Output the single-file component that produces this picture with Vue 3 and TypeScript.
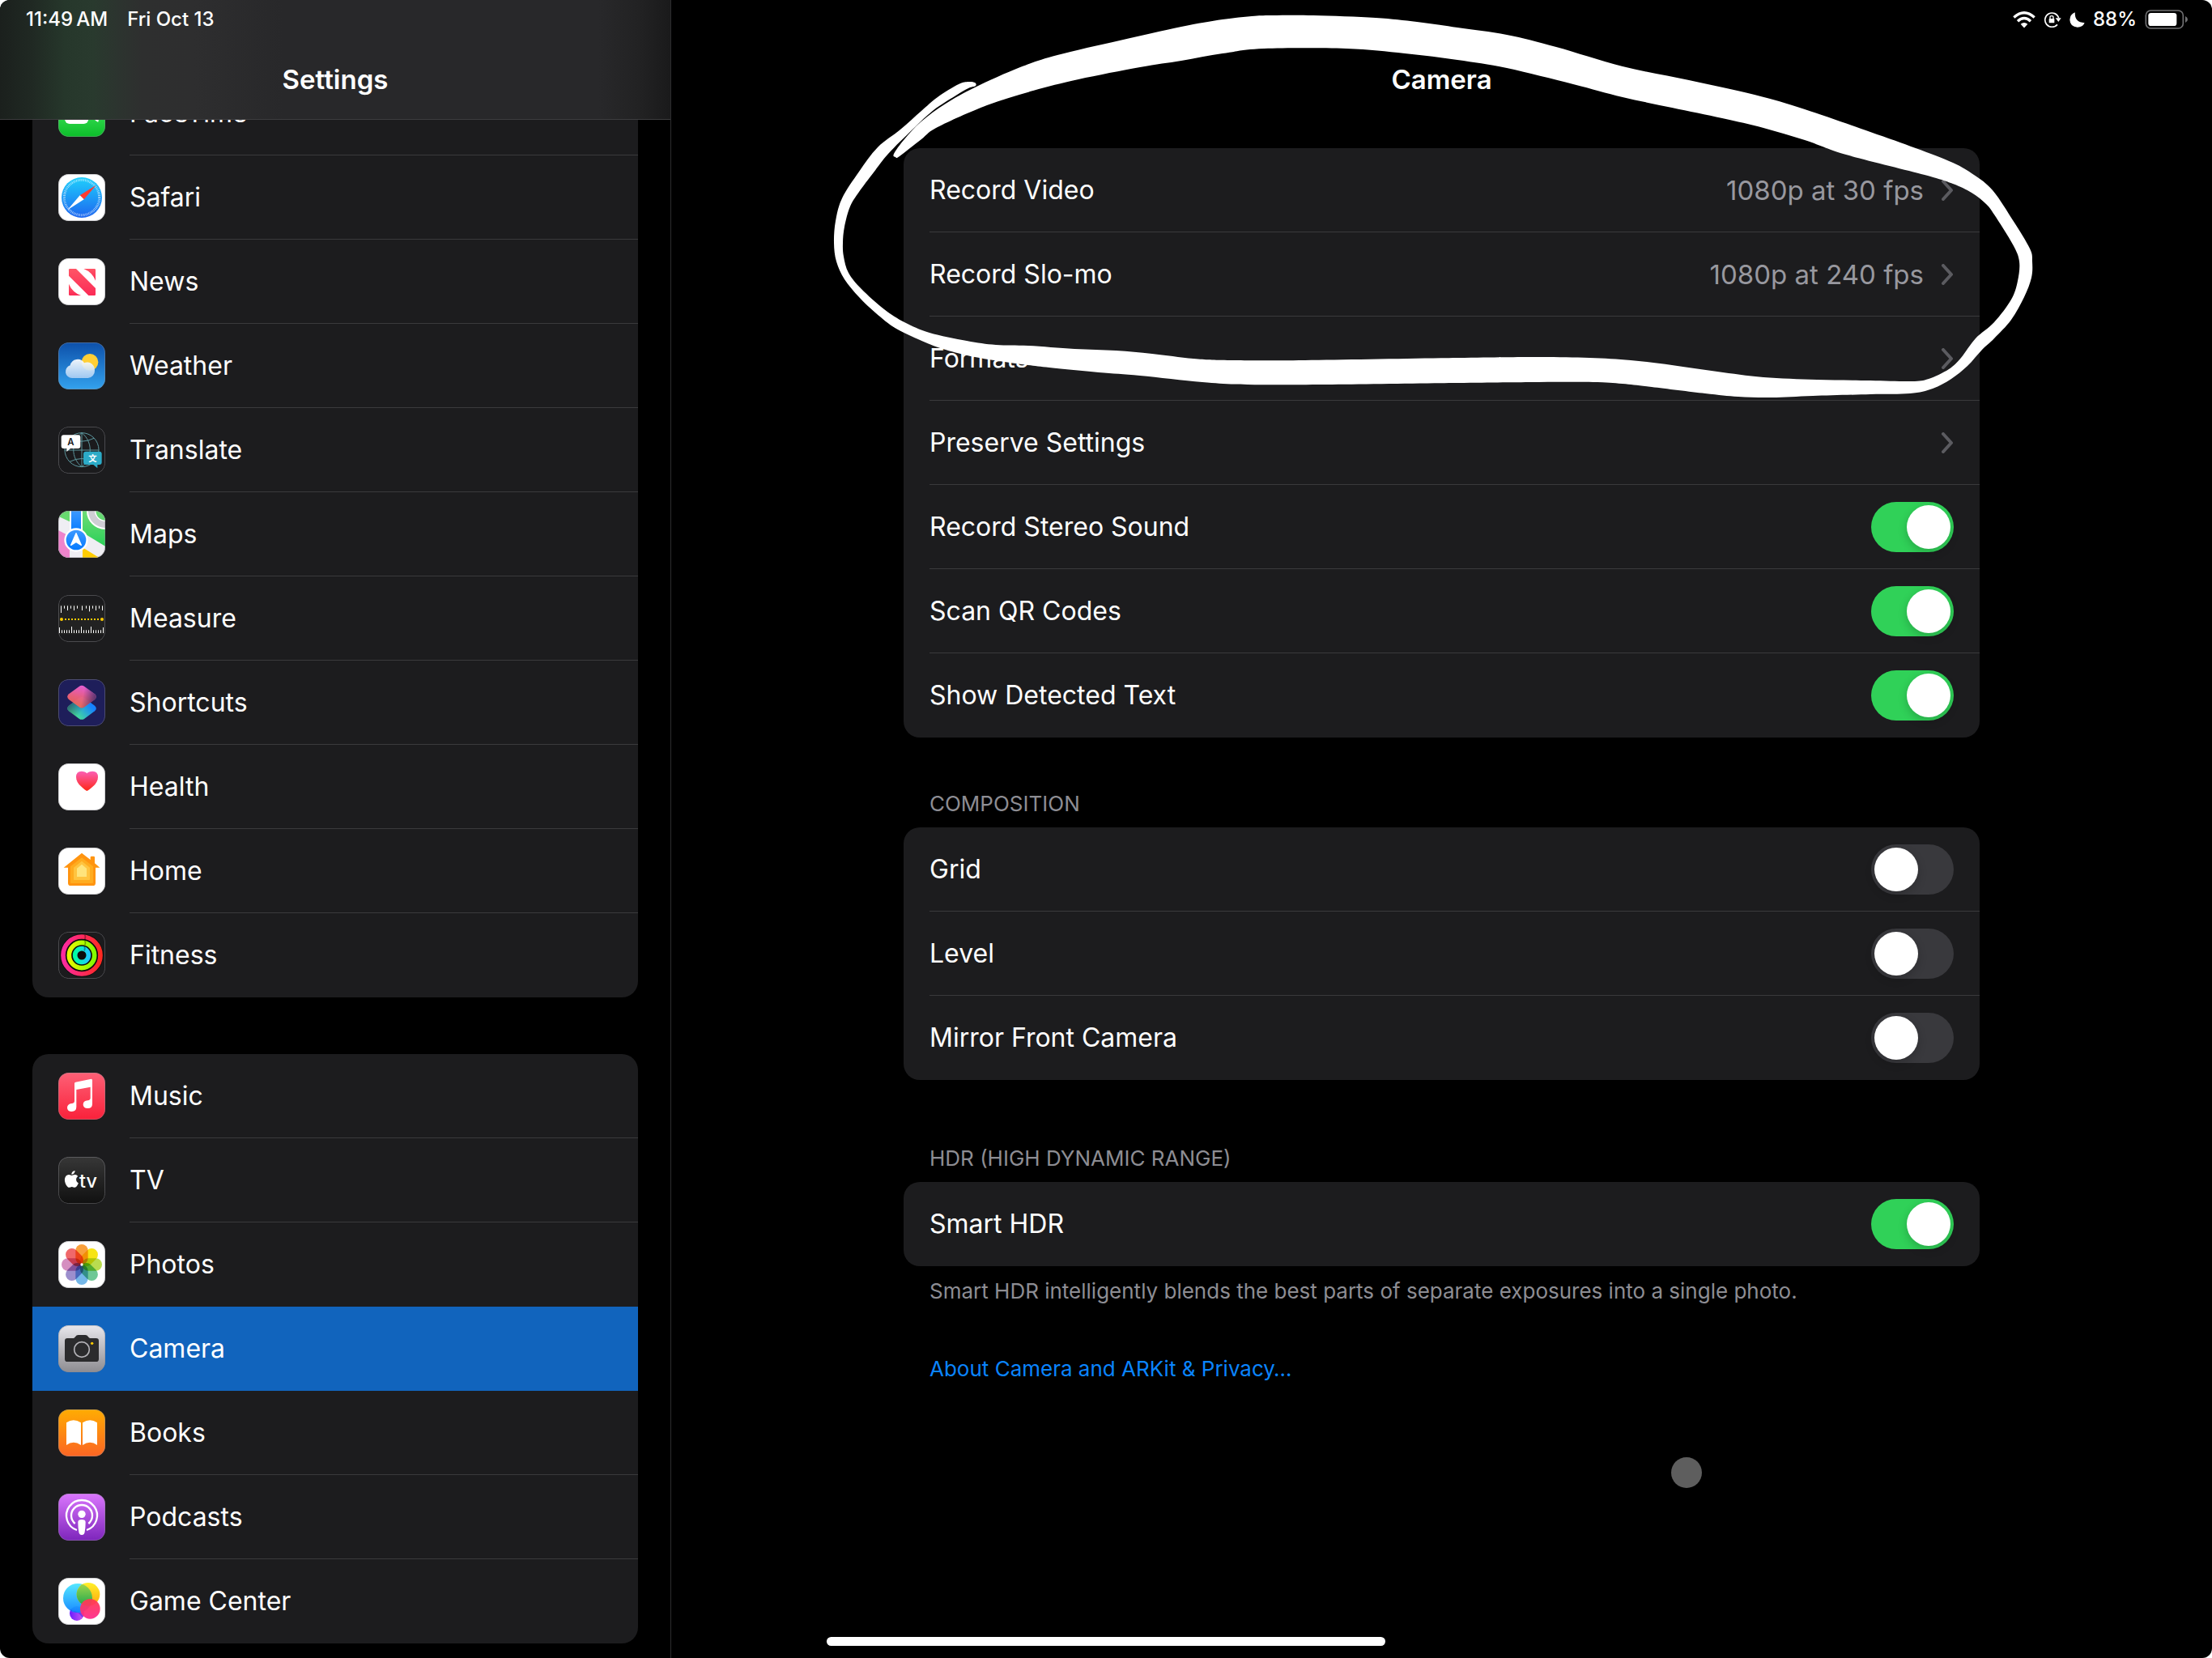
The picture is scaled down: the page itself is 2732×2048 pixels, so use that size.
<script setup lang="ts">
import { ref } from 'vue'

interface AppItem {
  name: string
  icon: string
}

interface LinkRow {
  kind: 'link'
  label: string
  value?: string
}

interface SwitchRow {
  kind: 'switch'
  label: string
  on: boolean
}

interface Group {
  title?: string
  spaced?: boolean
  footer?: string
  rows: (LinkRow | SwitchRow)[]
}

type Point = [number, number]

const appGroups: AppItem[][] = [
  [
    { name: 'FaceTime', icon: 'facetime' },
    { name: 'Safari', icon: 'safari' },
    { name: 'News', icon: 'news' },
    { name: 'Weather', icon: 'weather' },
    { name: 'Translate', icon: 'translate' },
    { name: 'Maps', icon: 'maps' },
    { name: 'Measure', icon: 'measure' },
    { name: 'Shortcuts', icon: 'shortcuts' },
    { name: 'Health', icon: 'health' },
    { name: 'Home', icon: 'home' },
    { name: 'Fitness', icon: 'fitness' },
  ],
  [
    { name: 'Music', icon: 'music' },
    { name: 'TV', icon: 'tv' },
    { name: 'Photos', icon: 'photos' },
    { name: 'Camera', icon: 'camera' },
    { name: 'Books', icon: 'books' },
    { name: 'Podcasts', icon: 'podcasts' },
    { name: 'Game Center', icon: 'game' },
  ],
]

const selected = ref('Camera')

const groups = ref<Group[]>([
  {
    rows: [
      { kind: 'link', label: 'Record Video', value: '1080p at 30 fps' },
      { kind: 'link', label: 'Record Slo-mo', value: '1080p at 240 fps' },
      { kind: 'link', label: 'Formats' },
      { kind: 'link', label: 'Preserve Settings' },
      { kind: 'switch', label: 'Record Stereo Sound', on: true },
      { kind: 'switch', label: 'Scan QR Codes', on: true },
      { kind: 'switch', label: 'Show Detected Text', on: true },
    ],
  },
  {
    title: 'COMPOSITION',
    rows: [
      { kind: 'switch', label: 'Grid', on: false },
      { kind: 'switch', label: 'Level', on: false },
      { kind: 'switch', label: 'Mirror Front Camera', on: false },
    ],
  },
  {
    title: 'HDR (HIGH DYNAMIC RANGE)',
    spaced: true,
    footer: 'Smart HDR intelligently blends the best parts of separate exposures into a single photo.',
    rows: [{ kind: 'switch', label: 'Smart HDR', on: true }],
  },
])

/* Vertical two-stop gradient */
const grad = (id: string, top: string, bottom: string): string =>
  `<linearGradient id="${id}" x1="0" y1="0" x2="0" y2="1"><stop offset="0" stop-color="${top}"/><stop offset="1" stop-color="${bottom}"/></linearGradient>`

const gradH = (id: string, left: string, right: string): string =>
  `<linearGradient id="${id}" x1="0" y1="0" x2="1" y2="0"><stop offset="0" stop-color="${left}"/><stop offset="1" stop-color="${right}"/></linearGradient>`

const tile = (fill: string): string => `<rect width="174" height="174" fill="${fill}"/>`

const tick = (x: number, y: number, h: number): string =>
  `<rect x="${x - 1}" y="${y}" width="3" height="${h}" fill="#fff"/>`

const topTicks = [[10, 26], [22, 10], [34, 17], [46, 10], [58, 17], [70, 10], [88, 17], [103, 10], [115, 21], [127, 10], [139, 17], [151, 10], [163, 17]]
  .map(([x, h]) => tick(x, 40, h))
  .join('')

const bottomTicks = Array.from({ length: 19 }, (_, i) => {
  const tall = i === 0 || i === 18
  const mid = i === 5 || i === 9 || i === 13
  const h = tall ? 21 : mid ? 24 : 11
  return tick(4 + i * 9, 141 - h, h)
}).join('')

const petals = ['#f9a03c', '#f7e414', '#b9dc4f', '#6fc796', '#74b7e8', '#9c8fcd', '#d58fc0', '#f0686a']
  .map(
    (color, i) =>
      `<rect x="64" y="12" width="46" height="74" rx="23" fill="${color}" transform="rotate(${i * 45} 87 87)" style="mix-blend-mode:multiply"/>`,
  )
  .join('')

const diamond = 'M97 27L135 55Q146 65 135 75L97 103Q87 110 77 103L39 75Q28 65 39 55L77 27Q87 20 97 27Z'

const icons: Record<string, string> = {
  facetime: `${grad('ft', '#5ff777', '#0bbd29')}${tile('url(#ft)')}
    <rect x="24" y="48" width="88" height="78" rx="18" fill="#fff"/><path d="M118 80L144 60Q149 57 149 63V115Q149 121 144 118L118 98Z" fill="#fff"/>`,
  safari: `${grad('sf', '#1fd0fc', '#1d66f0')}${tile('#fff')}
    <circle cx="87" cy="87" r="75" fill="url(#sf)"/>
    <circle cx="87" cy="87" r="65" fill="none" stroke="#fff" stroke-opacity=".8" stroke-width="9" stroke-dasharray="2 3.67"/>
    <path d="M140 41L95 94L80 79Z" fill="#ff3b30"/><path d="M34 133L80 79L95 94Z" fill="#fff"/>`,
  news: `${grad('nw', '#ff5566', '#fb2b56')}${tile('#fff')}
    <g fill="url(#nw)"><path d="M43 39H66L138 111V134Q138 138 134 138H112L39 65V43Q39 39 43 39Z"/>
    <path d="M94 39H134Q138 39 138 43V83Q126 52 94 39Z"/><path d="M39 95Q52 126 84 138H43Q39 138 39 134Z"/></g>`,
  weather: `${grad('wt', '#0d50aa', '#33a2ee')}${grad('wc', '#ffffff', '#a9cdf3')}${tile('url(#wt)')}
    <circle cx="117" cy="73" r="31" fill="#ffcf35"/>
    <path d="M51 132A24 24 0 0 1 44 85A28.500 28.500 0 0 1 96 76A28 28 0 0 1 135 104A27 27 0 0 1 110 132Z" fill="url(#wc)" fill-opacity=".92"/>`,
  translate: `${tile('#1b1b1d')}
    <g fill="none" stroke="#5d979e" stroke-width="3"><circle cx="87" cy="86" r="63"/><path d="M87 22V150M23 87H151"/>
    <path d="M87 23C128 55 128 117 87 149M87 23C46 55 46 117 87 149"/><path d="M42 43Q87 66 132 43M42 130Q87 107 132 130"/></g>
    <path d="M20 31H73Q82 31 82 40V72Q82 81 73 81H45L31 93V81H20Q11 81 11 72V40Q11 31 20 31Z" fill="#fff"/>
    <path d="M102 92H152Q161 92 161 101V132Q161 141 152 141H145V154L130 141H102Q93 141 93 132V101Q93 92 102 92Z" fill="#2cabc7"/>
    <text x="46" y="69" font-size="34" font-weight="600" text-anchor="middle" font-family="Inter, sans-serif" fill="#1c1c1e">A</text>
    <text x="127" y="128" font-size="31" font-weight="700" text-anchor="middle" font-family="'Noto Sans CJK SC', sans-serif" fill="#fff">文</text>`,
  maps: `${grad('mg', '#6fdc76', '#2bd058')}${grad('mb', '#3e99ff', '#057aff')}${tile('#efeef3')}
    <path d="M0 0H42V40L0 20Z" fill="#67db6f"/><path d="M0 72L42 94V174H0Z" fill="#ee84cc"/>
    <path d="M90 0H174V131L90 80Z" fill="url(#mg)"/><path d="M90 136L152 174H90Z" fill="#ffcc02"/>
    <circle cx="174" cy="0" r="52" fill="none" stroke="#fff" stroke-width="34"/><circle cx="174" cy="0" r="51" fill="none" stroke="#cfced4" stroke-width="24"/>
    <rect x="42" width="48" height="80" fill="#fff"/><rect x="48" width="36" height="80" fill="url(#mb)"/>
    <circle cx="66" cy="108" r="44" fill="#fff"/><circle cx="66" cy="108" r="37" fill="url(#mb)"/>
    <path d="M66 83L85 127L66 115L47 127Z" fill="#fff" stroke="#fff" stroke-width="4" stroke-linejoin="round"/>`,
  measure: `${tile('#1b1b1d')}<rect y="34" width="174" height="112" fill="#222"/>${topTicks}${bottomTicks}
    <path d="M24 90H152" stroke="#ffcc00" stroke-width="6" stroke-dasharray="6 6"/>
    <circle cx="12" cy="90" r="6" fill="#ffcc00"/><circle cx="162" cy="90" r="6" fill="#ffcc00"/>`,
  shortcuts: `<linearGradient id="s1" gradientUnits="userSpaceOnUse" x1="95" y1="28" x2="75" y2="104"><stop offset="0" stop-color="#f562d8"/><stop offset=".55" stop-color="#f8647f"/><stop offset="1" stop-color="#f4664f"/></linearGradient>
    <linearGradient id="s2" gradientUnits="userSpaceOnUse" x1="125" y1="60" x2="75" y2="104"><stop offset="0" stop-color="#1682ff"/><stop offset="1" stop-color="#45dc9a"/></linearGradient>
    <linearGradient id="s3" gradientUnits="userSpaceOnUse" x1="90" y1="65" x2="138" y2="75"><stop offset="0" stop-color="#4a2f6b" stop-opacity="0"/><stop offset="1" stop-color="#4a2f6b" stop-opacity=".9"/></linearGradient>
    <linearGradient id="s4" gradientUnits="userSpaceOnUse" x1="36" y1="50" x2="80" y2="84"><stop offset="0" stop-color="#26405f" stop-opacity=".8"/><stop offset="1" stop-color="#26405f" stop-opacity="0"/></linearGradient>
    ${tile('#1e1e5a')}
    <g transform="translate(0 43)"><path d="${diamond}" fill="url(#s2)"/><path d="${diamond}" fill="url(#s4)"/></g>
    <path d="${diamond}" fill="url(#s1)" fill-opacity=".92"/><path d="${diamond}" fill="url(#s3)"/>`,
  health: `${grad('hl', '#fb5fb4', '#fe2716')}${tile('#fff')}
    <path d="M106 102Q102 102 84 85Q66 68 66 50Q66 29 86 29Q100 29 106 37Q112 29 127 29Q147 29 147 50Q147 68 129 85Q110 102 106 102Z" fill="url(#hl)"/>`,
  home: `${tile('#fff')}
    <path d="M87 20L119 45V36Q119 32 123 32H131Q135 32 135 36V58L154 74H138V131Q138 141 128 141H46Q36 141 36 131V74H20Z" fill="#ff9410"/>
    <path d="M87 37L129 70V129Q129 132 126 132H48Q45 132 45 129V70Z" fill="#ffac1f"/>
    <path d="M87 50L117 74V117Q117 120 114 120H60Q57 120 57 117V74Z" fill="#ffc440"/>
    <path d="M87 62L105 77V108H69V77Z" fill="#ffe47c"/>`,
  fitness: `${gradH('r1', '#fd2aa0', '#ff2a22')}${gradH('r2', '#e6fa00', '#84fb00')}${gradH('r3', '#00ffa3', '#1fcaff')}${tile('#1b1b1d')}
    <circle cx="87" cy="87" r="80" fill="#0d0d0d"/>
    <g fill="none" stroke-width="17"><circle cx="87" cy="87" r="69" stroke="url(#r1)"/><circle cx="87" cy="87" r="47" stroke="url(#r2)"/><circle cx="87" cy="87" r="25" stroke="url(#r3)"/></g>
    <path d="M98 11Q103 19 98 28M98 33Q103 40 98 49M96 55Q101 62 96 70" fill="none" stroke="#000" stroke-opacity=".35" stroke-width="5"/>`,
  music: `${grad('mu', '#fd6076', '#fa213a')}${tile('url(#mu)')}
    <path d="M64 35L122 23Q126 23 126 28V116Q126 132 109 132Q92 132 92 118Q92 104 109 103Q119 102 119 94V53L67 63V127Q67 144 50 144Q33 144 33 130Q33 116 50 114Q60 113 60 105V40Q60 36 64 35Z" fill="#fff"/>`,
  tv: `${grad('tv', '#373737', '#101010')}${tile('url(#tv)')}
    <g transform="translate(18 51) scale(2.600)" fill="#fff"><path d="M12.152 6.896c-.948 0-2.415-1.078-3.960-1.040-2.040.027-3.910 1.183-4.961 3.014-2.117 3.675-.546 9.103 1.519 12.090 1.013 1.454 2.208 3.090 3.792 3.039 1.520-.065 2.090-.987 3.935-.987 1.831 0 2.350.987 3.960.948 1.637-.026 2.676-1.480 3.676-2.948 1.156-1.688 1.636-3.325 1.662-3.415-.039-.013-3.182-1.221-3.220-4.857-.026-3.040 2.480-4.494 2.597-4.559-1.429-2.090-3.623-2.324-4.390-2.376-2-.156-3.675 1.090-4.610 1.090zM15.530 3.830c.843-1.012 1.400-2.427 1.245-3.830-1.207.052-2.662.805-3.532 1.818-.780.896-1.454 2.338-1.273 3.714 1.338.104 2.715-.688 3.559-1.701"/></g>
    <text x="78" y="114" font-size="70" font-weight="500" font-family="Inter, sans-serif" fill="#fff">tv</text>`,
  photos: `${tile('#fff')}${petals}<circle cx="87" cy="87" r="5" fill="#fff"/>`,
  camera: `${grad('cm', '#e8e7ec', '#8d8c91')}${tile('url(#cm)')}
    <path d="M34 48H56Q60 48 63 43Q67 36 74 36H100Q107 36 111 43Q114 48 118 48H140Q150 48 150 58V125Q150 135 140 135H34Q24 135 24 125V58Q24 48 34 48Z" fill="#2b2b2d"/>
    <circle cx="87" cy="90" r="28" fill="none" stroke="#b3b2b7" stroke-width="5"/><circle cx="125" cy="67" r="5" fill="#ffcc00"/>`,
  books: `${grad('bk', '#ffac02', '#fb6524')}${tile('url(#bk)')}
    <path d="M84 49Q56 30 30 49V132Q56 113 84 132ZM90 49Q118 30 144 49V132Q118 113 90 132Z" fill="#fff"/>`,
  podcasts: `${grad('pd', '#da76fd', '#7d25bb')}${tile('url(#pd)')}
    <g fill="none" stroke="#fff" stroke-width="7"><path d="M69 135A57 57 0 1 1 105 135"/><path d="M62 111A39 39 0 1 1 112 111"/></g>
    <circle cx="87" cy="76" r="14" fill="#fff"/><path d="M73 106Q73 96 87 96Q101 96 101 106Q101 126 98 142Q97 153 87 153Q77 153 76 142Q73 126 73 106Z" fill="#fff"/>`,
  game: `${grad('g1', '#4be6ff', '#0a84ff')}${grad('g2', '#fff02a', '#ffa50a')}${grad('g3', '#ff3b4e', '#ff2a8c')}${gradH('g4', '#6a1cff', '#d05af0')}${grad('g5', '#a6d84a', '#1fa84e')}${tile('#fff')}
    <clipPath id="gc"><circle cx="72" cy="75" r="54"/></clipPath>
    <circle cx="69" cy="132" r="27" fill="url(#g4)"/><circle cx="72" cy="75" r="54" fill="url(#g1)" fill-opacity=".94"/>
    <circle cx="111" cy="61" r="43" fill="url(#g2)"/><circle cx="111" cy="61" r="43" fill="url(#g5)" clip-path="url(#gc)"/>
    <path d="M46 117Q72 138 94 124Q96 138 90 148Q70 120 44 122Z" fill="#4a30e8" fill-opacity=".6"/>
    <circle cx="118" cy="115" r="37" fill="url(#g3)" fill-opacity=".94"/>`,
}

/* Outline of the hand-drawn loop: round the outside, then back along the inside */
const loopPoints: Point[] = [
  [1104, 190], [1117, 172], [1138, 150], [1168, 128], [1204, 108], [1260, 83], [1306, 68], [1383, 50], [1459, 33], [1510, 24],
  [1546, 20], [1571, 19], [1622, 19], [1699, 22], [1750, 27], [1800, 34], [1861, 43], [1922, 58], [2004, 82], [2086, 99], [2167, 117],
  [2229, 135], [2310, 163], [2366, 183], [2412, 201], [2438, 216], [2461, 235], [2486, 272], [2507, 307], [2510, 323], [2509, 343],
  [2500, 367], [2484, 395], [2463, 418], [2448, 432], [2430, 452], [2410, 468], [2387, 480], [2359, 486], [2310, 487], [2239, 489],
  [2188, 491], [2147, 490], [2106, 486], [2040, 478], [2004, 474], [1968, 472], [1900, 472], [1800, 473], [1638, 475], [1541, 475], [1485, 472],
  [1408, 464], [1357, 460], [1296, 454], [1255, 449], [1204, 441], [1168, 432], [1143, 423], [1107, 406], [1082, 387], [1061, 367],
  [1043, 345], [1033, 323], [1030, 300], [1032, 273], [1040, 245], [1061, 212], [1084, 182], [1112, 160], [1138, 137], [1158, 120],
  [1184, 104], [1196, 101], [1204, 102], [1205, 106], [1196, 109], [1179, 119], [1153, 136], [1128, 159], [1097, 190], [1079, 213],
  [1061, 237], [1050, 255], [1043, 280], [1041, 300], [1042, 317], [1048, 337], [1064, 357], [1092, 382], [1117, 398], [1148, 411],
  [1194, 421], [1230, 426], [1270, 427], [1327, 431], [1378, 433], [1423, 437], [1474, 443], [1520, 445], [1612, 445], [1800, 442],
  [1900, 441], [1963, 442], [2014, 445], [2065, 451], [2121, 459], [2178, 466], [2244, 469], [2310, 470], [2361, 471], [2382, 468], [2407, 456],
  [2422, 442], [2440, 418], [2463, 398], [2484, 370], [2492, 347], [2494, 323], [2486, 302], [2463, 265], [2453, 252], [2435, 238],
  [2412, 227], [2377, 216], [2280, 191], [2229, 173], [2178, 158], [2127, 146], [2065, 133], [2004, 120], [1943, 104], [1861, 84],
  [1800, 74], [1735, 66], [1663, 60], [1561, 60], [1510, 66], [1459, 75], [1408, 83], [1332, 98], [1276, 112], [1219, 130],
  [1158, 157], [1138, 172], [1111, 193], [1106, 194],
]

/* Closed Catmull-Rom curve through the points */
function smooth(points: Point[]): string {
  const n = points.length
  let d = `M${points[0][0]} ${points[0][1]}`
  for (let i = 0; i < n; i++) {
    const [a, b, c, e] = [points[(i - 1 + n) % n], points[i], points[(i + 1) % n], points[(i + 2) % n]]
    d += `C${b[0] + (c[0] - a[0]) / 6} ${b[1] + (c[1] - a[1]) / 6} ${c[0] - (e[0] - b[0]) / 6} ${c[1] - (e[1] - b[1]) / 6} ${c[0]} ${c[1]}`
  }
  return d + 'Z'
}

const loopPath = smooth(loopPoints)
</script>

<template>
  <div class="screen">
    <aside class="sidebar">
      <header class="bar bar-side">
        <div class="status">
          <span>11:49&thinsp;AM</span>
          <span>Fri Oct 13</span>
        </div>
        <h1 class="title">Settings</h1>
      </header>
      <nav class="apps" aria-label="Apps">
        <div v-for="(group, g) in appGroups" :key="g" class="card">
          <a
            v-for="app in group"
            :key="app.name"
            href="#"
            class="app"
            :class="{ selected: app.name === selected }"
            @click.prevent="selected = app.name"
          >
            <svg class="app-icon" viewBox="0 0 174 174" aria-hidden="true">
              <g v-html="icons[app.icon]"></g>
              <rect x="1" y="1" width="172" height="172" rx="37" fill="none" stroke="#8e8e93" stroke-opacity=".5" stroke-width="3" />
            </svg>
            <span class="app-name">{{ app.name }}</span>
          </a>
        </div>
      </nav>
    </aside>

    <main class="pane">
      <header class="bar">
        <div class="status status-right">
          <svg class="wifi" viewBox="0 0 84 62" aria-label="Wi-Fi">
            <g fill="none" stroke="#fff" stroke-width="10">
              <path d="M4 22Q42 -12 80 22" />
              <path d="M18 36Q42 14 66 36" />
            </g>
            <path d="M29 47Q42 36 55 47L42 61Z" fill="#fff" />
          </svg>
          <svg class="lock" viewBox="0 0 64 60" aria-label="Rotation lock">
            <path d="M50 49A26 26 0 1 1 55 24" fill="none" stroke="#fff" stroke-width="5" />
            <path d="M43 25H64L54 39Z" fill="#fff" />
            <rect x="19" y="27" width="20" height="16" rx="2" fill="#fff" />
            <path d="M23 28V22Q23 17 29 17Q35 17 35 22V28" fill="none" stroke="#fff" stroke-width="4" />
          </svg>
          <svg class="moon" viewBox="0 0 56 56" aria-label="Do not disturb">
            <path d="M20 1Q18 38 55 39Q48 55 29 55Q2 53 1 28Q2 8 20 1Z" fill="#fff" />
          </svg>
          <span class="percent">88%</span>
          <svg class="battery" viewBox="0 0 160 72" aria-label="Battery">
            <rect x="3" y="3" width="138" height="66" rx="18" fill="none" stroke="#717173" stroke-width="5" />
            <rect x="12" y="12" width="105" height="48" rx="10" fill="#fff" />
            <path d="M149 24Q158 28 158 36Q158 44 149 48Z" fill="#717173" />
          </svg>
        </div>
        <h2 class="title">Camera</h2>
      </header>

      <div class="content">
        <section v-for="(group, g) in groups" :key="g" class="group">
          <h3 v-if="group.title" class="caption" :class="{ spaced: group.spaced }">{{ group.title }}</h3>
          <div class="card">
            <template v-for="row in group.rows" :key="row.label">
              <button v-if="row.kind === 'link'" type="button" class="row">
                <span class="row-body">
                  <span class="row-label">{{ row.label }}</span>
                  <span class="row-value">{{ row.value }}</span>
                  <svg class="chevron" viewBox="0 0 16 26" aria-hidden="true">
                    <path d="M3 2L13 13L3 24" fill="none" stroke="#5b5b60" stroke-width="4" stroke-linecap="round" stroke-linejoin="round" />
                  </svg>
                </span>
              </button>
              <label v-else class="row">
                <span class="row-body">
                  <span class="row-label">{{ row.label }}</span>
                  <input v-model="row.on" type="checkbox" role="switch" class="switch" />
                </span>
              </label>
            </template>
          </div>
          <p v-if="group.footer" class="footer">{{ group.footer }}</p>
        </section>
        <a href="#" class="privacy">About Camera and ARKit &amp; Privacy…</a>

        <svg class="loop" viewBox="1016 0 1529 500" aria-hidden="true">
          <path :d="loopPath" fill="#fff" />
        </svg>
      </div>
    </main>

    <span class="pointer"></span>
    <span class="home-indicator"></span>
  </div>
</template>

<style>
body {
  background: #fff;
}
</style>

<style scoped>
.screen {
  position: relative;
  display: flex;
  height: 100vh;
  overflow: hidden;
  border-radius: 12px;
  background: #000;
  color: #fff;
  font-family: Inter, "Liberation Sans", sans-serif;
  font-size: 32px;
  line-height: 40px;
}

.screen * {
  box-sizing: border-box;
}

.sidebar {
  flex: 0 0 829px;
  border-right: 1px solid #2c2c2e;
}

.bar {
  height: 148px;
}

.bar-side {
  position: relative;
  z-index: 1;
  border-bottom: 1px solid #3d3d3f;
  background: linear-gradient(
    to right,
    #1b201d 0,
    #202923 40px,
    #26372b 80px,
    #293a2e 115px,
    #2c342f 145px,
    #2e2f2f 175px,
    #2e2e2f 240px,
    #28282a 350px,
    #28282a 740px,
    #222223 790px,
    #1a1a1b 828px
  );
}

.status {
  display: flex;
  align-items: center;
  gap: 24px;
  height: 48px;
  padding: 0 32px;
  font-size: 24px;
  line-height: 28px;
  font-weight: 500;
}

.status-right {
  justify-content: flex-end;
  gap: 10px;
  padding: 0 29px;
}

.wifi {
  width: 28px;
  height: 21px;
}

.lock {
  width: 22px;
  height: 20px;
}

.moon {
  width: 19px;
  height: 19px;
}

.battery {
  width: 54px;
  height: 24px;
}

.title {
  margin: 0;
  font-size: 33px;
  line-height: 100px;
  font-weight: 600;
  text-align: center;
}

.apps {
  display: flex;
  flex-direction: column;
  gap: 70px;
  margin-top: -60px;
  padding: 0 40px;
}

.card {
  overflow: hidden;
  border-radius: 20px;
  background: #1c1c1e;
}

.app {
  display: flex;
  align-items: center;
  gap: 30px;
  height: 104px;
  padding-left: 32px;
  color: inherit;
  text-decoration: none;
}

.app-icon {
  flex: none;
  width: 58px;
  height: 58px;
  border-radius: 13px;
  isolation: isolate;
}

.app-name {
  flex: 1;
  box-shadow: inset 0 -1px #3a3a3c;
  line-height: 104px;
}

.app:last-child .app-name,
.app.selected .app-name,
.app:has(+ .selected) .app-name {
  box-shadow: none;
}

.app.selected {
  background: #1164bd;
}

.pane {
  flex: 1;
}

.content {
  position: relative;
  max-width: 1329px;
  margin: 0 auto;
  padding-top: 35px;
}

.row {
  display: block;
  width: 100%;
  height: 104px;
  padding: 0 0 0 32px;
  border: 0;
  background: none;
  color: inherit;
  font: inherit;
  text-align: left;
}

.row-body {
  display: flex;
  align-items: center;
  height: 104px;
  padding-right: 32px;
  box-shadow: inset 0 -1px #3a3a3c;
}

.row:last-child .row-body {
  box-shadow: none;
}

.row-label {
  flex: 1;
}

.row-value {
  margin-right: 21px;
  color: #98989f;
  font-size: 33px;
}

.chevron {
  width: 16px;
  height: 26px;
}

.switch {
  appearance: none;
  width: 102px;
  height: 62px;
  margin: 0;
  padding: 4px;
  border-radius: 31px;
  background: #39393d;
}

.switch::before {
  content: "";
  display: block;
  width: 54px;
  height: 54px;
  border-radius: 50%;
  background: #fff;
  box-shadow: 0 4px 12px rgba(0, 0, 0, 0.2);
}

.switch:checked {
  background: #30d158;
}

.switch:checked::before {
  margin-left: auto;
}

.caption,
.footer,
.privacy {
  font-size: 26px;
  line-height: 32px;
  font-weight: 400;
}

.caption {
  margin: 66px 32px 13px;
  color: #8d8d93;
}

.caption.spaced {
  margin-top: 81px;
}

.footer {
  margin: 15px 32px 64px;
  color: #8d8d93;
}

.privacy {
  display: block;
  margin: 0 32px;
  color: #0a84ff;
  text-decoration: none;
}

.loop {
  position: absolute;
  top: -148px;
  left: -100px;
  width: 1529px;
  height: 500px;
  pointer-events: none;
}

.pointer {
  position: absolute;
  top: 1800px;
  left: 2064px;
  width: 38px;
  height: 38px;
  border-radius: 50%;
  background: #5e5e5e;
}

.home-indicator {
  position: absolute;
  bottom: 15px;
  left: 50%;
  width: 690px;
  height: 11px;
  border-radius: 6px;
  background: #fff;
  transform: translateX(-50%);
}
</style>
